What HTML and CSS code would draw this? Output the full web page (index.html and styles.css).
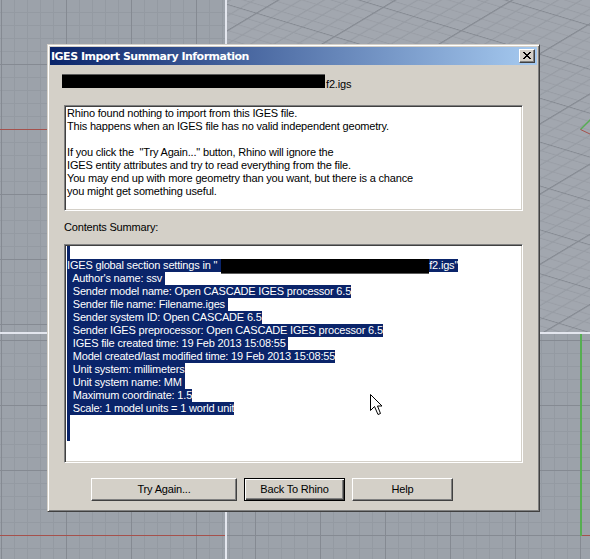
FILE: index.html
```html
<!DOCTYPE html>
<html>
<head>
<meta charset="utf-8">
<title>IGES Import Summary Information</title>
<link rel="stylesheet" href="styles.css">
</head>
<body>
<div class="desktop">
  <div class="vp vp-ortho vp-tl"></div>
  <div class="vp vp-persp">
    <svg class="vp-svg" width="363" height="332">
      <defs>
        <pattern id="pg" width="65" height="65" patternUnits="userSpaceOnUse" patternTransform="matrix(1.2 0.36 -0.75 0.45 0 -40)">
          <path class="pg-minor" d="M0 13H65M0 26H65M0 39H65M0 52H65M13 0V65M26 0V65M39 0V65M52 0V65"/>
          <path class="pg-major" d="M0 0.5H65M0.5 0V65"/>
        </pattern>
      </defs>
      <rect width="363" height="332" fill="url(#pg)"/>
      <line class="ax-green" x1="353.5" y1="129.5" x2="364" y2="119"/>
      <line class="ax-red" x1="353.5" y1="129.5" x2="364" y2="134.5"/>
    </svg>
  </div>
  <div class="vp vp-ortho vp-bl"></div>
  <div class="vp vp-ortho vp-br"></div>

  <div class="dialog">
    <div class="titlebar">
      <span class="title">IGES Import Summary Information</span>
      <span class="close">
        <svg width="8" height="7" viewBox="0 0 8 7" shape-rendering="crispEdges"><path d="M0 0h2v1h-2zM6 0h2v1h-2zM1 1h2v1h-2zM5 1h2v1h-2zM2 2h4v1h-4zM3 3h2v1h-2zM2 4h4v1h-4zM1 5h2v1h-2zM5 5h2v1h-2zM0 6h2v1h-2zM6 6h2v1h-2z" fill="#000"/></svg>
      </span>
    </div>
    <div class="content">
      <div class="filename"><span class="redact"></span><span class="fname">f2.igs</span></div>
      <div class="box box-msg">
        <div class="msg">Rhino found nothing to import from this IGES file.
This happens when an IGES file has no valid independent geometry.

If you click the  "Try Again..." button, Rhino will ignore the
IGES entity attributes and try to read everything from the file.
You may end up with more geometry than you want, but there is a chance
you might get something useful.</div>
      </div>
      <div class="label">Contents Summary:</div>
      <div class="box box-summary">
        <div class="ln"><span class="sel empty"></span></div>
        <div class="ln"><span class="sel">IGES global section settings in "<span class="redact2"></span>f2.igs"</span></div>
        <div class="ln"><span class="sel">  Author's name: ssv </span></div>
        <div class="ln"><span class="sel">  Sender model name: Open CASCADE IGES processor 6.5</span></div>
        <div class="ln"><span class="sel">  Sender file name: Filename.iges </span></div>
        <div class="ln"><span class="sel">  Sender system ID: Open CASCADE 6.5</span></div>
        <div class="ln"><span class="sel">  Sender IGES preprocessor: Open CASCADE IGES processor 6.5</span></div>
        <div class="ln"><span class="sel">  IGES file created time: 19 Feb 2013 15:08:55 </span></div>
        <div class="ln"><span class="sel">  Model created/last modified time: 19 Feb 2013 15:08:55</span></div>
        <div class="ln"><span class="sel">  Unit system: millimeters</span></div>
        <div class="ln"><span class="sel">  Unit system name: MM </span></div>
        <div class="ln"><span class="sel">  Maximum coordinate: 1.5</span></div>
        <div class="ln"><span class="sel">  Scale: 1 model units = 1 world unit</span></div>
        <div class="ln"><span class="sel empty"></span></div>
        <div class="ln"><span class="sel empty"></span></div>
      </div>
      <div class="buttons">
        <button class="btn btn-try">Try Again...</button>
        <button class="btn btn-default">Back To Rhino</button>
        <button class="btn btn-help">Help</button>
      </div>
    </div>
  </div>

  <svg class="cursor" width="14" height="22" viewBox="0 0 14 22">
    <path d="M0.5 0.5V16.5L4.5 12.5L8 20.5L10.5 19.5L7.5 12H12Z" fill="#fff" stroke="#000" stroke-width="1" stroke-linejoin="miter"/>
  </svg>
</div>
</body>
</html>
```

FILE: styles.css
```css
* { box-sizing: border-box; }
html, body { margin: 0; padding: 0; }
body {
  width: 590px;
  height: 559px;
  overflow: hidden;
  font-family: "Liberation Sans", Arial, sans-serif;
  font-size: 11px;
  letter-spacing: -0.18px;
  color: #000;
}

/* ---------- Rhino viewports ---------- */
.desktop {
  position: relative;
  width: 590px;
  height: 559px;
  display: grid;
  grid-template-columns: 225px 363px;
  grid-template-rows: 332px 225px;
  gap: 2px;
  background: #e3e6ee;
}
.vp {
  overflow: hidden;
  background-color: #9ca2aa;
}
.vp-svg { display: block; }
.vp-ortho {
  --major: #858a92;
  --minor: #949aa2;
  --red: #a5514c;
  --green: #56ae52;
}
.vp-tl {
  background-image:
    linear-gradient(var(--red), var(--red)),
    linear-gradient(to right, var(--major) 1px, transparent 1px),
    linear-gradient(to bottom, var(--major) 1px, transparent 1px),
    linear-gradient(to right, var(--minor) 1px, transparent 1px),
    linear-gradient(to bottom, var(--minor) 1px, transparent 1px);
  background-size: 100% 1px, 65px 65px, 65px 65px, 13px 13px, 13px 13px;
  background-position: 0 129px, 1px 0, 0 64px, 1px 0, 0 64px;
  background-repeat: no-repeat, repeat, repeat, repeat, repeat;
}
.vp-bl {
  background-image:
    linear-gradient(var(--red), var(--red)),
    linear-gradient(to right, var(--major) 1px, transparent 1px),
    linear-gradient(to bottom, var(--major) 1px, transparent 1px),
    linear-gradient(to right, var(--minor) 1px, transparent 1px),
    linear-gradient(to bottom, var(--minor) 1px, transparent 1px);
  background-size: 100% 1px, 65px 65px, 65px 65px, 13px 13px, 13px 13px;
  background-position: 0 201px, 1px 0, 0 6px, 1px 0, 0 6px;
  background-repeat: no-repeat, repeat, repeat, repeat, repeat;
}
.vp-br {
  background-image:
    linear-gradient(var(--green), var(--green)),
    linear-gradient(var(--red), var(--red)),
    linear-gradient(to right, var(--major) 1px, transparent 1px),
    linear-gradient(to bottom, var(--major) 1px, transparent 1px),
    linear-gradient(to right, var(--minor) 1px, transparent 1px),
    linear-gradient(to bottom, var(--minor) 1px, transparent 1px);
  background-size: 2px 202px, 10px 1px, 65px 65px, 65px 65px, 13px 13px, 13px 13px;
  background-position: 353px 0, 355px 201px, 28px 0, 0 6px, 28px 0, 0 6px;
  background-repeat: no-repeat, no-repeat, repeat, repeat, repeat, repeat;
}
.vp-persp { background-color: #a2a7af; }
.pg-minor { stroke: #979ca4; stroke-width: 1.3; fill: none; }
.pg-major { stroke: #858a92; stroke-width: 1.6; fill: none; }
.ax-red { stroke: #a5514c; stroke-width: 1; }
.ax-green { stroke: #56ae52; stroke-width: 1.4; }

/* ---------- Dialog window ---------- */
.dialog {
  position: absolute;
  left: 47px;
  top: 44px;
  width: 493px;
  height: 468px;
  background: #d4d0c8;
  border: 1px solid;
  border-color: #d4d0c8 #404040 #404040 #d4d0c8;
  box-shadow: inset 1px 1px #ffffff, inset -1px -1px #808080;
  padding: 2px;
  display: flex;
  flex-direction: column;
}
.titlebar {
  height: 18px;
  flex: none;
  display: flex;
  align-items: center;
  padding: 0 2px 0 1px;
  background: linear-gradient(to right, #0a246a, #a6caf0);
}
.title {
  font-family: "DejaVu Sans", Verdana, sans-serif;
  font-weight: bold;
  font-size: 11px;
  color: #fff;
  white-space: nowrap;
  letter-spacing: -0.5px;
}
.close {
  margin-left: auto;
  width: 16px;
  height: 14px;
  background: #d4d0c8;
  border: 1px solid;
  border-color: #fff #404040 #404040 #fff;
  box-shadow: inset -1px -1px #808080;
  display: flex;
  align-items: center;
  justify-content: center;
  padding: 0 1px 1px 0;
}
.close svg { display: block; }

.content {
  flex: 1;
  display: flex;
  flex-direction: column;
  padding: 0 14px;
}
.filename {
  margin: 9px 0 0 -2px;
  height: 17px;
  display: flex;
  align-items: flex-end;
}
.redact {
  align-self: flex-start;
  width: 263px;
  height: 14px;
  background: #000;
  box-shadow: inset 0 1px #5a5a5a;
}
.fname {
  line-height: 13px;
  margin-left: 1px;
}

.box {
  background: #fff;
  border: 1px solid;
  border-color: #808080 #fff #fff #808080;
  box-shadow: inset 1px 1px #404040, inset -1px -1px #d4d0c8;
  flex: none;
}
.box-msg {
  margin-top: 14px;
  height: 106px;
  padding: 1px 2px 0 2px;
}
.msg {
  white-space: pre;
  line-height: 13px;
}
.label {
  margin-top: 10px;
  height: 13px;
  line-height: 13px;
  margin-bottom: 10px;
}
.box-summary {
  height: 219px;
  padding: 1px 2px;
}
.ln { height: 13px; }
.sel {
  display: inline-block;
  height: 13px;
  line-height: 13px;
  white-space: pre;
  background: #0a246a;
  color: #fff;
  vertical-align: top;
}
.sel.empty { width: 3px; }
.redact2 {
  display: inline-block;
  width: 208px;
  height: 14px;
  margin-left: 4px;
  vertical-align: top;
  background: #000;
  box-shadow: 0 1px 0 #5c5c5c;
}

.buttons {
  margin-top: 15px;
  display: flex;
  gap: 7px;
  padding-left: 27px;
}
.btn {
  height: 23px;
  font-family: "Liberation Sans", Arial, sans-serif;
  font-size: 11px;
  letter-spacing: -0.18px;
  line-height: 13px;
  color: #000;
  background: #d4d0c8;
  border: 1px solid;
  border-color: #fff #404040 #404040 #fff;
  box-shadow: inset -1px -1px #808080;
  padding: 0 0 1px 0;
  margin: 0;
  border-radius: 0;
}
.btn-try { width: 146px; }
.btn-default {
  width: 101px;
  border-color: #000;
  box-shadow: inset 1px 1px #fff, inset -1px -1px #404040, inset -2px -2px #808080;
}
.btn-help { width: 101px; }

.cursor {
  position: absolute;
  left: 370px;
  top: 394px;
}
```
